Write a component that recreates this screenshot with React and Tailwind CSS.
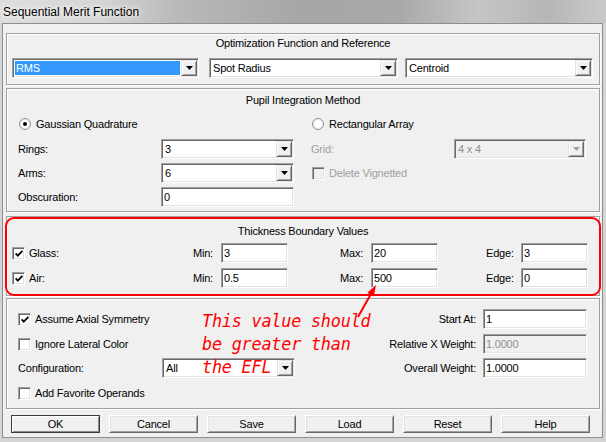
import React from "react";

// classic win32 sunken frame
const sunken =
  "border border-[#a0a0a0] border-b-white border-r-white shadow-[inset_1px_1px_0_#696969,inset_-1px_-1px_0_#e3e3e3]";
const raised =
  "border border-[#e3e3e3] border-b-[#696969] border-r-[#696969] shadow-[inset_1px_1px_0_#fff,inset_-1px_-1px_0_#a0a0a0]";

const Group = ({ className = "", children }) => (
  <div
    className={`ml-[3px] w-[594px] border border-[#a0a0a0] shadow-[inset_1px_1px_0_#fff,1px_1px_0_#fff] ${className}`}
  >
    {children}
  </div>
);

const Input = ({ value, w = "w-[67px]", disabled }) => (
  <div
    className={`${sunken} ${w} h-[20px] flex items-center pl-[2px] ${
      disabled ? "bg-[#f0f0f0] text-[#8f8f8f]" : "bg-white"
    }`}
  >
    {value}
  </div>
);

const DropBtn = ({ disabled }) => (
  <div className={`${raised} w-[16px] shrink-0 bg-[#f0f0f0] flex items-center justify-center`}>
    <svg width="7" height="4" viewBox="0 0 7 4">
      <polygon points="0,0 7,0 3.5,4" fill={disabled ? "#a0a0a0" : "#000"} />
    </svg>
  </div>
);

const Select = ({ value, w, highlight, disabled }) => (
  <div
    className={`${sunken} ${w} h-[20px] flex items-stretch p-[1px] ${
      disabled ? "bg-[#f0f0f0] text-[#8f8f8f]" : "bg-white"
    }`}
  >
    {highlight ? (
      <div className="flex-1 m-[1px] bg-[#3399ff] text-white flex items-center pl-[1px]">{value}</div>
    ) : (
      <div className="flex-1 flex items-center pl-[2px]">{value}</div>
    )}
    <DropBtn disabled={disabled} />
  </div>
);

const Check = ({ checked, disabled, label, className = "" }) => (
  <div className={`flex items-center gap-[4px] whitespace-nowrap ${disabled ? "text-[#a0a0a0]" : ""} ${className}`}>
    <div
      className={`${sunken} w-[13px] h-[13px] shrink-0 flex items-center justify-center ${
        disabled ? "bg-[#f0f0f0]" : "bg-white"
      }`}
    >
      {checked && (
        <svg width="8" height="7" viewBox="0 0 8 7">
          <path d="M0.6 3.4 L2.8 5.7 L7.4 0.9" stroke="#000" strokeWidth="1.8" fill="none" />
        </svg>
      )}
    </div>
    <span>{label}</span>
  </div>
);

const Radio = ({ checked, label, className = "" }) => (
  <div className={`flex items-center gap-[5px] whitespace-nowrap ${className}`}>
    <svg width="12" height="12" viewBox="0 0 12 12" className="shrink-0">
      <circle cx="6" cy="6" r="5.5" fill="#fff" stroke="#8c8c8c" />
      <circle cx="6" cy="6" r="4.5" fill="none" stroke="#e0e0e0" />
      {checked && <circle cx="6" cy="6" r="2" fill="#000" />}
    </svg>
    <span>{label}</span>
  </div>
);

const Btn = ({ label, def }) => (
  <div
    className={`w-[89px] h-[18px] flex items-center justify-center bg-[#f0f0f0] ${
      def
        ? "border border-[#3c3c3c] shadow-[inset_1px_1px_0_#fff,inset_-1px_-1px_0_#8a8a8a]"
        : "border border-[#fff] border-b-[#696969] border-r-[#696969] shadow-[inset_1px_1px_0_#e3e3e3,inset_-1px_-1px_0_#a0a0a0]"
    }`}
  >
    {label}
  </div>
);

export default function App() {
  return (
    <div className="relative w-[606px] h-[442px] overflow-hidden bg-[#d4d4d4] font-['Liberation_Sans',Arial,sans-serif] text-[11px] tracking-[-0.2px] text-black">
      {/* title bar */}
      <div className="h-[23px] flex items-center pl-[3px] bg-[linear-gradient(90deg,#dedede_0%,#d6d6d6_16%,#b8b8b8_30%,#a6a6a6_50%,#a9a9a9_66%,#c6c6c6_79%,#b6b6b6_90%,#c9c9c9_100%)]">
        <span className="text-[12px] tracking-normal [text-shadow:0_0_8px_#fff,0_0_4px_#fff]">
          Sequential Merit Function
        </span>
      </div>

      {/* client area */}
      <div className="ml-[2px] mr-[3px] h-[415px] border border-[#8e8e8e] bg-[#f0f0f0]">
        <Group className="mt-[9px] h-[52px] pt-[3px]">
          <div className="text-center leading-[13px]">Optimization Function and Reference</div>
          <div className="flex mt-[8px] pl-[5px]">
            <Select w="w-[187px]" value="RMS" highlight />
            <div className="ml-[10px]">
              <Select w="w-[189px]" value="Spot Radius" />
            </div>
            <div className="ml-[7px]">
              <Select w="w-[188px]" value="Centroid" />
            </div>
          </div>
        </Group>

        <Group className="mt-[3px] h-[124px] pt-[5px]">
          <div className="text-center leading-[13px]">Pupil Integration Method</div>
          <div className="grid grid-cols-[143px_133px_17px_143px_132px] pl-[11px] mt-[7px] h-[20px] items-center">
            <Radio checked label="Gaussian Quadrature" className="col-span-2 ml-[1px]" />
            <div />
            <Radio label="Rectangular Array" className="col-span-2 ml-[1px]" />
          </div>
          <div className="grid grid-cols-[143px_133px_17px_143px_132px] pl-[11px] mt-[5px] h-[20px] items-center">
            <span>Rings:</span>
            <Select w="w-[133px]" value="3" />
            <div />
            <span className="text-[#a0a0a0]">Grid:</span>
            <Select w="w-[132px]" value="4 x 4" disabled />
          </div>
          <div className="grid grid-cols-[143px_133px_17px_143px_132px] pl-[11px] mt-[4px] h-[20px] items-center">
            <span>Arms:</span>
            <Select w="w-[133px]" value="6" />
            <div />
            <Check disabled label="Delete Vignetted" className="col-span-2 ml-[1px]" />
          </div>
          <div className="grid grid-cols-[143px_133px_17px_143px_132px] pl-[11px] mt-[4px] h-[20px] items-center">
            <span>Obscuration:</span>
            <Input w="w-[133px]" value="0" />
          </div>
        </Group>

        <Group className="relative mt-[4px] h-[80px] pt-[8px]">
          <div className="text-center leading-[13px]">Thickness Boundary Values</div>
          <div className="grid grid-cols-[181px_28px_67px_52px_31px_67px_48px_35px_67px] pl-[5px] mt-[5px] h-[20px] items-center">
            <Check checked label="Glass:" />
            <span>Min:</span>
            <Input value="3" />
            <div />
            <span>Max:</span>
            <Input value="20" />
            <div />
            <span>Edge:</span>
            <Input value="3" />
          </div>
          <div className="grid grid-cols-[181px_28px_67px_52px_31px_67px_48px_35px_67px] pl-[5px] mt-[5px] h-[20px] items-center">
            <Check checked label="Air:" />
            <span>Min:</span>
            <Input value="0.5" />
            <div />
            <span>Max:</span>
            <Input value="500" />
            <div />
            <span>Edge:</span>
            <Input value="0" />
          </div>
          {/* red annotation frame */}
          <div className="absolute -left-[2px] -right-[2px] top-0 -bottom-[1px] border-2 border-[#ff0000] rounded-[9px] pointer-events-none" />
        </Group>

        <Group className="mt-[2px] h-[111px] pt-[10px]">
          <div className="grid grid-cols-[144px_133px_181px_7px_104px] pl-[11px] h-[20px] items-center">
            <Check checked label="Assume Axial Symmetry" />
            <div />
            <span className="text-right">Start At:</span>
            <div />
            <Input w="w-[104px]" value="1" />
          </div>
          <div className="grid grid-cols-[144px_133px_181px_7px_104px] pl-[11px] mt-[5px] h-[20px] items-center">
            <Check label="Ignore Lateral Color" />
            <div />
            <span className="text-right">Relative X Weight:</span>
            <div />
            <Input w="w-[104px]" value="1.0000" disabled />
          </div>
          <div className="grid grid-cols-[144px_133px_181px_7px_104px] pl-[11px] mt-[4px] h-[20px] items-center">
            <span>Configuration:</span>
            <Select w="w-[133px]" value="All" />
            <span className="text-right">Overall Weight:</span>
            <div />
            <Input w="w-[104px]" value="1.0000" />
          </div>
          <div className="grid grid-cols-[144px_133px_181px_7px_104px] pl-[11px] mt-[5px] h-[20px] items-center">
            <Check label="Add Favorite Operands" />
          </div>
        </Group>

        <div className="flex gap-[9px] ml-[8px] mt-[6px]">
          <Btn label="OK" def />
          <Btn label="Cancel" />
          <Btn label="Save" />
          <Btn label="Load" />
          <Btn label="Reset" />
          <Btn label="Help" />
        </div>
      </div>

      {/* annotation */}
      <div className="absolute left-[202px] top-[310px] whitespace-pre font-['DejaVu_Sans_Mono',monospace] italic text-[16.8px] leading-[23px] text-[#ff0000] pointer-events-none">
        {"This value should\nbe greater than\nthe EFL"}
      </div>
      <svg className="absolute left-0 top-0 pointer-events-none" width="606" height="442" viewBox="0 0 606 442">
        <line x1="358" y1="317" x2="372" y2="292" stroke="#ff0000" strokeWidth="2" />
        <polygon points="376,285 373.8,296.5 367.4,292.8" fill="#ff0000" />
      </svg>
    </div>
  );
}
